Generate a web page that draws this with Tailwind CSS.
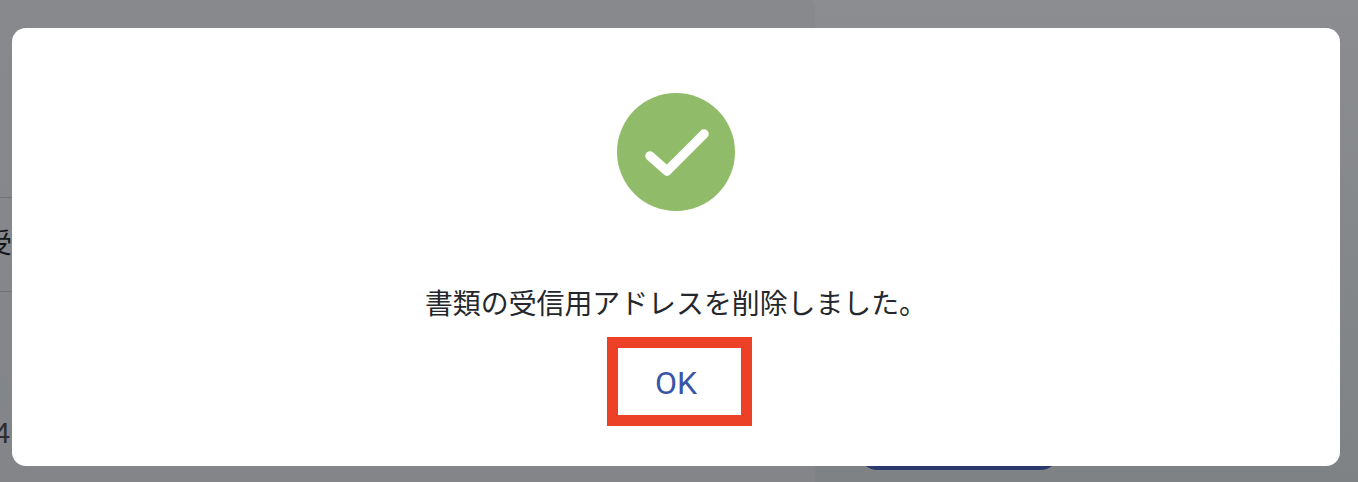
<!DOCTYPE html>
<html lang="ja">
<head>
    <meta charset="UTF-8">
    <title>書類の受信用アドレス</title>
    <script src="https://cdn.jsdelivr.net/npm/@tailwindcss/browser@4"></script>
</head>
<body class="m-0 overflow-hidden">
    <div class="relative w-[1358px] h-[482px] overflow-hidden bg-gradient-to-b from-[#8b8d91] to-[#7f8285] font-['Liberation_Sans','Noto_Sans_CJK_JP',sans-serif]">
        <!-- page behind the dialog -->
        <div class="flex h-full">
            <div class="w-[815px] h-full pt-[197px] bg-[#85878a]/60 rounded-tr-lg">
                <div class="h-[95px] border-y border-[#6f727a] flex items-center text-[27px] text-[#15161a] -ml-[15px]">受</div>
                <div class="mt-[126px] text-[29px] leading-[30px] text-[#2a2c30] -ml-[6px]">4</div>
            </div>
            <div class="flex-1 relative">
                <div class="absolute left-[43px] top-[430px] w-[202px] h-[40px] rounded-[20px] bg-[#29396b]"></div>
            </div>
        </div>

        <!-- dialog -->
        <div class="absolute left-[12px] top-[28px] w-[1328px] h-[438px] bg-white rounded-[14px] flex flex-col items-center pt-[65px]">
            <svg class="w-[118px] h-[118px]" viewBox="0 0 118 118">
                <circle cx="59" cy="59" r="59" fill="#90bc69"/>
                <path d="M33 63 L50 78 L87 41" fill="none" stroke="#fff" stroke-width="9.5" stroke-linecap="round" stroke-linejoin="round"/>
            </svg>
            <p class="mt-[74px] text-[27.9px] leading-[40px] text-[#24272b] whitespace-nowrap">書類の受信用アドレスを削除しました。</p>
            <button class="mt-[12px] ml-[7px] w-[145px] h-[89px] border-[11px] border-[#ec4126] bg-white text-[#3a54a8] text-[32px] font-['Roboto',sans-serif] pr-[7px] pt-[2px] flex items-center justify-center">OK</button>
        </div>
    </div>
</body>
</html>
